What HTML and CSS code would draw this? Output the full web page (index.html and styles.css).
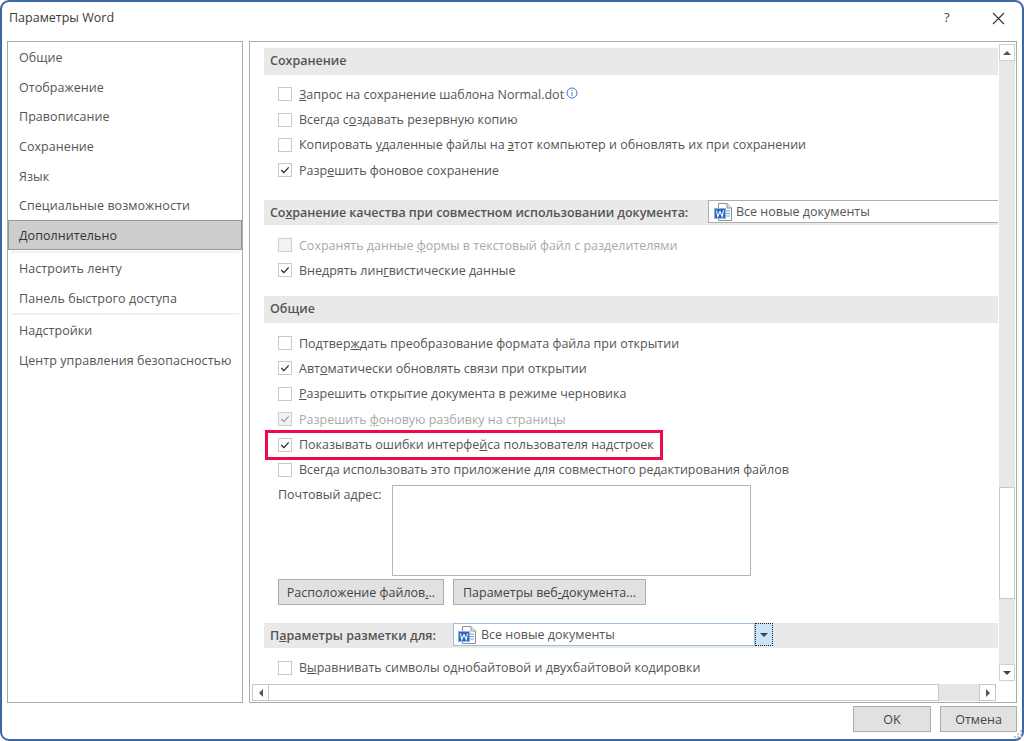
FILE: index.html
```html
<!DOCTYPE html>
<html lang="ru">
<head>
<meta charset="utf-8">
<title>Параметры Word</title>
<link rel="stylesheet" href="styles.css">
</head>
<body>
<svg class="defs" width="0" height="0" aria-hidden="true">
  <symbol id="doc" viewBox="0 0 18 18">
    <path d="M4.5.5h8.5l4.5 4.5v12.5h-13z" fill="#fff" stroke="#8f8f8f"/>
    <path d="M13 .5v4.5h4.5" fill="#e8e8e8" stroke="#8f8f8f"/>
    <path d="M12 8h4M12 10.5h4M12 13h4" stroke="#6f9fd8"/>
    <rect x="0.5" y="5.5" width="11" height="10" fill="#2b67c0" stroke="#8db4e6"/>
    <path d="M2.5 7.5l1.3 6 2.2-5 2.2 5 1.3-6" fill="none" stroke="#fff" stroke-width="1.1"/>
  </symbol>
  <symbol id="tick" viewBox="0 0 13 13">
    <path d="M2.5 6.5l2.8 2.8 5.2-5.6" fill="none" stroke="currentColor" stroke-width="1.3"/>
  </symbol>
</svg>
<div class="window">
  <header class="titlebar">
    <span class="title">Параметры Word</span>
    <span class="help">?</span>
    <svg class="close" width="13" height="13" viewBox="0 0 13 13"><path d="M1 1l11 11M12 1L1 12" stroke="#333" stroke-width="1.1" fill="none"/></svg>
  </header>
  <main class="main">
    <nav class="sidebar">
      <div class="nav-item">Общие</div>
      <div class="nav-item">Отображение</div>
      <div class="nav-item">Правописание</div>
      <div class="nav-item">Сохранение</div>
      <div class="nav-item">Язык</div>
      <div class="nav-item">Специальные возможности</div>
      <div class="nav-item selected">Дополнительно</div>
      <div class="nav-sep"></div>
      <div class="nav-item">Настроить ленту</div>
      <div class="nav-item">Панель быстрого доступа</div>
      <div class="nav-sep"></div>
      <div class="nav-item">Надстройки</div>
      <div class="nav-item">Центр управления безопасностью</div>
    </nav>
    <section class="panel">
      <div class="pane">
        <div class="content">
          <h2 class="section first">Сохранение</h2>
          <div class="rows rows-first">
            <div class="row"><span class="box"></span><span><u>З</u>апрос на сохранение шаблона Normal.dot</span>
              <svg class="info" width="12" height="12" viewBox="0 0 12 12"><circle cx="6" cy="6" r="5" fill="#fff" stroke="#3b7cc4"/><path d="M6 3v1.2M6 5.2V9" stroke="#3b7cc4" fill="none"/></svg></div>
            <div class="row"><span class="box"></span><span>Всегда с<u>о</u>здавать резервную копию</span></div>
            <div class="row"><span class="box"></span><span>Копировать <u>у</u>даленные файлы на <u>э</u>тот компьютер и обновлять их при сохранении</span></div>
            <div class="row"><span class="box"><svg class="tick"><use href="#tick"/></svg></span><span>Разр<u>е</u>шить фоновое сохранение</span></div>
          </div>
          <div class="section combo-section quality-section">
            <h2 class="section-label label-quality">Со<u>х</u>ранение качества при совместном использовании документа:</h2>
            <div class="combo combo-wide"><svg class="doc"><use href="#doc"/></svg><span>Все новые документы</span></div>
          </div>
          <div class="rows">
            <div class="row disabled"><span class="box"></span><span>Сохранять данные <u>ф</u>ормы в текстовый файл с разделителями</span></div>
            <div class="row"><span class="box"><svg class="tick"><use href="#tick"/></svg></span><span>Вне<u>д</u>рять лин<u>г</u>вистические данные</span></div>
          </div>
          <h2 class="section general">Общие</h2>
          <div class="rows">
            <div class="row"><span class="box"></span><span>Подтвер<u>ж</u>дать преобразование формата файла при открытии</span></div>
            <div class="row"><span class="box"><svg class="tick"><use href="#tick"/></svg></span><span>Авт<u>о</u>матически обновлять связи при открытии</span></div>
            <div class="row"><span class="box"></span><span><u>Р</u>азрешить открытие документа в режиме черновика</span></div>
            <div class="row disabled"><span class="box"><svg class="tick"><use href="#tick"/></svg></span><span>Разрешить <u>ф</u>оновую разбивку на страницы</span></div>
            <div class="row highlighted"><span class="box"><svg class="tick"><use href="#tick"/></svg></span><span>Показывать ошибки интерфе<u>й</u>са пользователя надстроек</span></div>
            <div class="row"><span class="box"></span><span>Всегда использовать это приложение для совместного редактирования файлов</span></div>
          </div>
          <div class="mail">
            <span class="mail-label">Почтовый а<u>д</u>рес:</span>
            <div class="mail-input"></div>
          </div>
          <div class="buttons">
            <button class="btn btn-files">Расположение файлов<u>.</u>..</button>
            <button class="btn btn-web">Параметры веб<u>-</u>документа...</button>
          </div>
          <div class="section combo-section layout-section">
            <h2 class="section-label label-layout">П<u>а</u>раметры разметки для:</h2>
            <div class="combo combo-layout"><svg class="doc"><use href="#doc"/></svg><span>Все новые документы</span></div>
            <div class="combo-arrow"><i class="tri down"></i></div>
          </div>
          <div class="rows">
            <div class="row"><span class="box"></span><span>В<u>ы</u>равнивать символы однобайтовой и двухбайтовой кодировки</span></div>
          </div>
        </div>
        <div class="vscroll">
          <div class="sbtn"><i class="tri up"></i></div>
          <div class="vtrack"><div class="vthumb"></div></div>
          <div class="sbtn"><i class="tri down"></i></div>
        </div>
      </div>
      <div class="hscroll">
        <div class="sbtn-h"><i class="tri left"></i></div>
        <div class="hthumb"></div>
        <div class="htrack"></div>
        <div class="sbtn-h"><i class="tri right"></i></div>
      </div>
    </section>
  </main>
  <footer class="footer">
    <button class="btn btn-ok">OK</button>
    <button class="btn btn-cancel">Отмена</button>
    <svg class="grip" width="10" height="10" viewBox="0 0 10 10"><path d="M8 1h2v2H8zM5 4h2v2H5zM8 4h2v2H8zM2 7h2v2H2zM5 7h2v2H5zM8 7h2v2H8z" fill="#c4c4c4"/></svg>
  </footer>
</div>
</body>
</html>
```
FILE: styles.css
```css
*, *::before, *::after { box-sizing: border-box; }
html, body { margin: 0; padding: 0; background: #fff; }
body { width: 1024px; height: 741px; overflow: hidden; font: 12.5px/17px "Open Sans", "Noto Sans", sans-serif; color: #4c4c4c; }
.defs { display: block; height: 0; }
.window { width: 1024px; height: 741px; border: 2px solid #3d68a6; border-radius: 9px; background: #fff; position: relative; display: flex; flex-direction: column; padding: 0 5px; }
.titlebar { height: 39px; display: flex; align-items: center; flex: none; }
.title { margin-left: 2px; color: #3a3a3a; margin-top: -8px; }
.help { margin-left: auto; margin-top: -8px; color: #444; font-size: 13px; width: 13px; margin-right: 35px; }
.close { margin-top: -7px; margin-right: 12px; flex: none; }
.main { flex: none; height: 662px; display: flex; gap: 6px; }
.sidebar { width: 236px; flex: none; border: 1px solid #ababab; display: flex; flex-direction: column; }
.nav-item { height: 29.7px; line-height: 31.5px; padding-left: 11px; white-space: nowrap; color: #555; flex: none; letter-spacing: 0.06px; }
.nav-item.selected { background: #cdcdcd; border: 1px solid #969696; padding-left: 10px; color: #333; line-height: 29.5px; }
.nav-sep { height: 2px; margin: 1px 3px 0; background: #f0f0f0; flex: none; }
.panel { width: 768px; flex: none; border: 1px solid #ababab; display: flex; flex-direction: column; padding: 2px 1px 1px 2px; }
.pane { height: 640px; display: flex; overflow: hidden; flex: none; }
.content { width: 746px; flex: none; padding-left: 12px; overflow: hidden; }
.section { background: #e9e9e9; margin: 0; font-weight: 600; font-size: 12.5px; color: #555; height: 27px; line-height: 25px; padding-left: 6px; }
.section.first { margin-top: 4px; }
.section.quality-section { margin-top: 17px; }
.section.general { margin-top: 13px; line-height: 26px; }
.combo-section { display: flex; height: 25px; align-items: flex-start; }
.section-label { margin: 0; font: inherit; white-space: nowrap; }
.label-quality { letter-spacing: -0.05px; }
.label-layout { width: 183px; flex: none; }
.combo { background: #fff; border: 1px solid #abadb3; height: 23px; display: flex; align-items: center; padding-left: 5px; font-weight: 400; color: #555; flex: none; }
.doc { width: 18px; height: 18px; margin-right: 4px; flex: none; }
.combo-wide { margin-left: auto; width: 290px; border-right: 0; }
.combo-layout { width: 302px; border-color: #9dbce0; padding-left: 4px; }
.combo-layout .doc { margin-right: 5px; }
.combo-arrow { width: 18px; height: 23px; background: #cce4f7; border: 1px dotted #222; display: flex; align-items: center; justify-content: center; flex: none; }
.rows { padding-top: 7.25px; }
.rows-first { padding-top: 6.5px; }
.row { height: 25.4px; display: flex; align-items: center; padding-left: 14px; white-space: nowrap; position: relative; color: #555; }
.row.disabled { color: #a9a9a9; }
.row.disabled .box { background: #f2f2f2; color: #9a9a9a; border-color: #cfcfcf; }
.box { width: 14px; height: 14px; border: 1px solid #c9c9c9; background: #fff; margin-right: 7px; flex: none; display: flex; color: #222; }
.tick { width: 12px; height: 12px; }
.info { align-self: flex-start; margin-top: 5px; margin-left: 2px; }
.highlighted::after { content: ""; position: absolute; left: 1px; top: -2px; width: 398px; height: 30px; border: 3px solid #f00848; }
.mail { display: flex; padding-left: 14px; margin-top: 2.35px; }
.mail-label { width: 114px; padding: 1px 0 0; color: #555; }
.mail-input { width: 359px; height: 91px; border: 1px solid #b5b5b5; background: #fff; }
.buttons { display: flex; padding-left: 14px; gap: 9px; margin-top: 3px; }
.btn { background: #e1e1e1; border: 1px solid #adadad; font: inherit; color: #444; height: 26px; padding: 0; white-space: nowrap; }
.btn-files { width: 166px; }
.btn-web { width: 193px; }
.section.layout-section { margin-top: 18px; }
.vscroll { width: 16px; display: flex; flex-direction: column; background: #e8e8e8; margin: 0 0 3px 1px; flex: none; }
.sbtn { height: 17px; flex: none; background: #fff; border: 1px solid #d0d0d0; display: flex; align-items: center; justify-content: center; }
.vtrack { flex: 1; padding-top: 426px; }
.vthumb { height: 112px; background: #fff; border: 1px solid #c8c8c8; }
.hscroll { display: flex; height: 17px; width: 744px; background: #fff; flex: none; }
.sbtn-h { width: 17px; flex: none; background: #fff; border: 1px solid #c8c8c8; display: flex; align-items: center; justify-content: center; }
.hthumb { width: 670px; background: #fff; border: 1px solid #c8c8c8; border-left: 0; flex: none; }
.htrack { flex: 1; background: #e6e6e6; }
.tri { width: 0; height: 0; display: block; border: 4px solid transparent; }
.tri.up { border-top: 0; border-bottom: 4px solid #555; }
.tri.down { border-bottom: 0; border-top: 4px solid #444; }
.tri.left { border-left: 0; border-right: 4px solid #555; }
.tri.right { border-right: 0; border-left: 4px solid #555; }
.footer { flex: 1; display: flex; justify-content: flex-end; gap: 9px; padding-top: 3px; align-items: flex-start; }
.btn-ok { width: 78px; }
.btn-cancel { width: 77px; }
.grip { position: absolute; right: 0; bottom: 0; }
```
